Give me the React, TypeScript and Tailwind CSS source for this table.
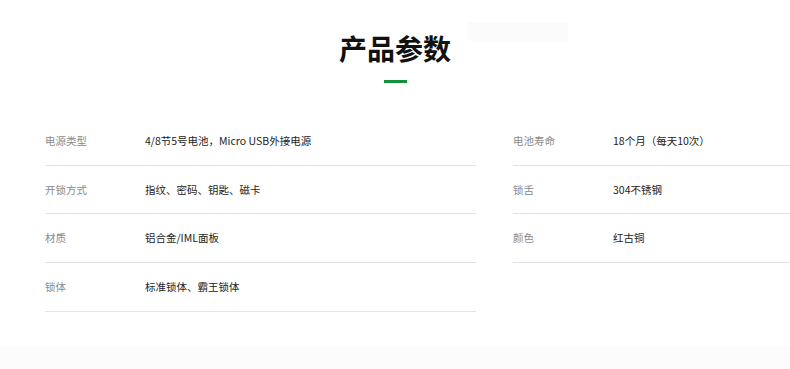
const LEFT = [
  { label: '电源类型', value: '4/8节5号电池，Micro USB外接电源' },
  { label: '开锁方式', value: '指纹、密码、钥匙、磁卡' },
  { label: '材质', value: '铝合金/IML面板' },
  { label: '锁体', value: '标准锁体、霸王锁体' },
]

const RIGHT = [
  { label: '电池寿命', value: '18个月（每天10次）' },
  { label: '锁舌', value: '304不锈钢' },
  { label: '颜色', value: '红古铜' },
]

function ParamRow({ label, value }: { label: string; value: string }) {
  return (
    <div className="flex h-[48.67px] items-center border-b border-[#e3e3e3] text-[10.5px]">
      <span className="w-[100px] shrink-0 text-[#8a8a8a]">{label}</span>
      <span className="text-[#222]">{value}</span>
    </div>
  )
}

export default function App() {
  return (
    <div
      className="relative min-h-[369px] w-[790px] overflow-hidden bg-white"
      style={{ fontFamily: '"Noto Sans CJK SC", "Noto Sans", sans-serif' }}
    >
      {/* faint overlay strip near the title */}
      <div className="absolute left-[467px] top-[22px] h-[19px] w-[101px] bg-[#fbfbfb]" />

      {/* ── Title ── */}
      <div className="flex flex-col items-center pt-[27px]">
        <h2 className="text-[28px] font-bold leading-[42px] text-[#111]">产品参数</h2>
        <div className="mt-[11px] h-[3px] w-[23px] bg-[#15903b]" />
      </div>

      {/* ── Params ── */}
      <div className="mt-[34px] flex gap-[37px] pl-[45px]">
        <div className="w-[431px]">
          {LEFT.map((r) => (
            <ParamRow key={r.label} {...r} />
          ))}
        </div>
        <div className="flex-1">
          {RIGHT.map((r) => (
            <ParamRow key={r.label} {...r} />
          ))}
        </div>
      </div>

      {/* ── Next section ── */}
      <div className="mt-[35px] h-[40px] bg-[#fcfcfc]" />
    </div>
  )
}
